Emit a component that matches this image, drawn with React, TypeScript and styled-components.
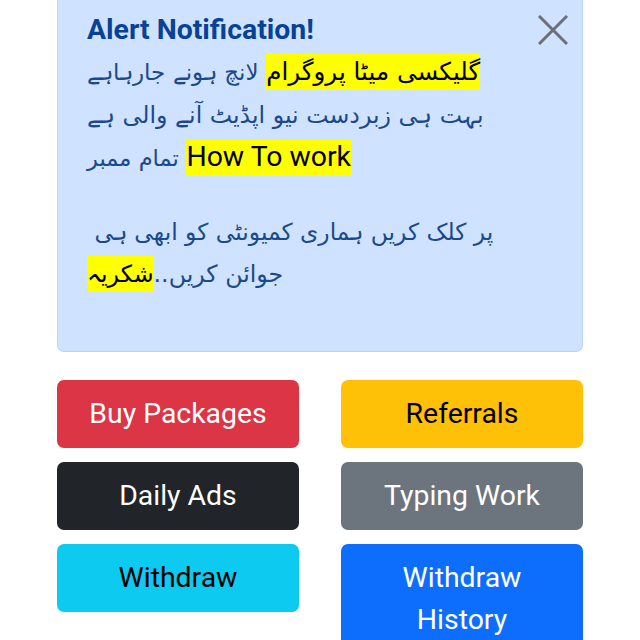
import { createGlobalStyle, styled } from 'styled-components';

const GlobalStyle = createGlobalStyle`
  html, body {
    margin: 0;
    height: 640px;
    overflow: hidden;
    background-color: #fff;
  }
  * {
    box-sizing: border-box;
  }
`;

const Page = styled.div`
  width: 640px;
  height: 640px;
  overflow: hidden;
  padding: 0 57px;
  font-family: Roboto, 'Noto Sans', 'DejaVu Sans', sans-serif;
  font-size: 28.4px;
  line-height: 42px;
`;

const Alert = styled.div`
  position: relative;
  height: 352px;
  padding: 9px 29px 0;
  color: #1b4a8c;
  background-color: #cfe2ff;
  border: 1px solid #b6d4fe;
  border-top: none;
  border-radius: 0 0 7px 7px;
`;

const AlertTitle = styled.h4`
  margin: 0;
  height: 42px;
  font-size: 28.4px;
  font-weight: 700;
  line-height: 42px;
  color: #084298;
`;

const Message = styled.p`
  margin: 0 0 31px;
  font-family: 'DejaVu Sans', sans-serif;
  font-size: 23.7px;
  line-height: 42.5px;
  white-space: nowrap;
`;

const Run = styled.span<{ $size: number }>`
  font-size: ${(p) => p.$size}px;
`;

const Latin = styled.span`
  font-family: Roboto, sans-serif;
  font-size: 28.4px;
`;

const Mark = styled.mark<{ $size?: number }>`
  padding: 4px 0;
  font-size: ${(p) => (p.$size ? `${p.$size}px` : 'inherit')};
  background-color: #ff0;
  color: #000;
`;

const CloseButton = styled.button`
  position: absolute;
  top: 15px;
  right: 14px;
  width: 30px;
  height: 30px;
  padding: 0;
  display: flex;
  border: none;
  background: none;
  color: #6c6f73;
`;

const ButtonGrid = styled.div`
  display: grid;
  grid-template-columns: 242px 242px;
  justify-content: space-between;
  align-items: start;
  row-gap: 14px;
  margin-top: 28px;
`;

const palette = {
  danger: { bg: '#dc3545', fg: '#fff' },
  warning: { bg: '#ffc107', fg: '#000' },
  dark: { bg: '#212529', fg: '#fff' },
  secondary: { bg: '#6c757d', fg: '#fff' },
  info: { bg: '#0dcaf0', fg: '#000' },
  primary: { bg: '#0d6efd', fg: '#fff' },
};

const ActionButton = styled.a<{ $variant: keyof typeof palette }>`
  display: block;
  padding: 13px 24px;
  border-radius: 7px;
  text-align: center;
  background-color: ${(p) => palette[p.$variant].bg};
  color: ${(p) => palette[p.$variant].fg};
`;

export default function App() {
  return (
    <>
      <GlobalStyle />
      <Page>
        <Alert>
          <AlertTitle>Alert Notification!</AlertTitle>
          <CloseButton aria-label="Close">
            <svg width="30" height="30" viewBox="0 0 30 30" fill="none" stroke="currentColor" strokeWidth="3">
              <path d="M1 1 L29 29 M29 1 L1 29" />
            </svg>
          </CloseButton>
          <Message>
            <Mark $size={24.6}>گلیکسی میٹا پروگرام</Mark> <Run $size={23}>لانچ ہونے جارہاہے</Run>
            <br />
            بہت ہی زبردست نیو اپڈیٹ آنے والی ہے
            <br />
            <Run $size={22.6}>تمام ممبر</Run> <Mark><Latin>How To work</Latin></Mark>
          </Message>
          <Message>
            <Run $size={23.4}>&nbsp;پر کلک کریں ہماری کمیونٹی کو ابھی ہی</Run>
            <br />
            <span dir="rtl">جوائن کریں..<Mark>شکریہ</Mark></span>
          </Message>
        </Alert>
        <ButtonGrid>
          <ActionButton $variant="danger">Buy Packages</ActionButton>
          <ActionButton $variant="warning">Referrals</ActionButton>
          <ActionButton $variant="dark">Daily Ads</ActionButton>
          <ActionButton $variant="secondary">Typing Work</ActionButton>
          <ActionButton $variant="info">Withdraw</ActionButton>
          <ActionButton $variant="primary">Withdraw History</ActionButton>
        </ButtonGrid>
      </Page>
    </>
  );
}
